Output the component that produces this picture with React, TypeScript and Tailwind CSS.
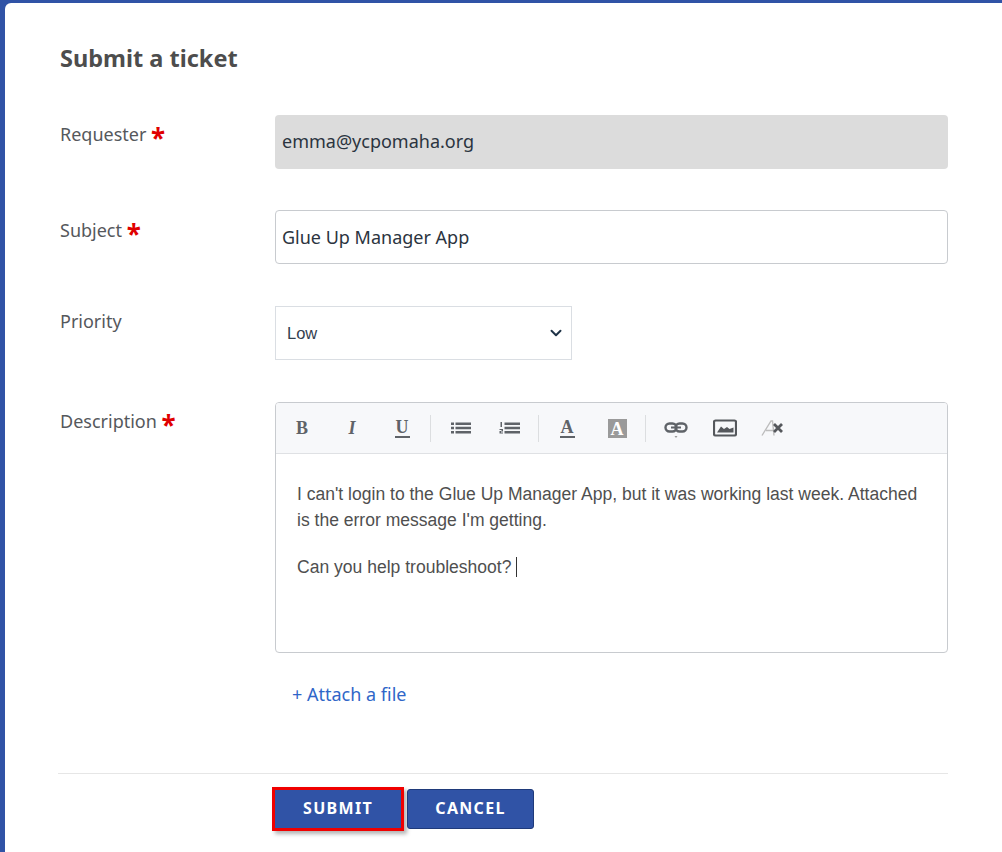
import { ChevronDown } from 'lucide-react'

const labelFont = 'font-["Noto_Sans","Open_Sans",sans-serif]'

function Star() {
  return <span className="text-[26px] leading-[18px] font-bold text-[#e00000] align-[-7px]">*</span>
}

function Label({ text, required }: { text: string; required?: boolean }) {
  return (
    <div className={`w-[215px] shrink-0 text-[18px] leading-[24px] text-[#55585c] ${labelFont}`}>
      {text}
      {required && <> <Star /></>}
    </div>
  )
}

function Sep({ className }: { className: string }) {
  return <div className={`h-[27px] w-px bg-[#dcdee0] ${className}`} />
}

function Tool({ children }: { children: React.ReactNode }) {
  return <div className="flex h-[28px] w-[40px] items-center justify-center text-[#5f6368]">{children}</div>
}

function Letter({ c, cls }: { c: string; cls: string }) {
  return <span className={`font-["Liberation_Serif",serif] text-[18px] leading-none ${cls}`}>{c}</span>
}

function ListIcon({ numbered }: { numbered?: boolean }) {
  return (
    <svg width="22" height="14" viewBox="0 0 22 14" fill="#5f6368">
      {numbered ? (
        <>
          <rect x="1.500" y="1" width="1.500" height="5" />
          <path d="M0.500 8h3.500v2.500h-2v1h2v1h-3.500v-2.500h2v-1h-2z" />
        </>
      ) : (
        <>
          <rect x="1" y="1.500" width="3" height="2.500" />
          <rect x="1" y="5.750" width="3" height="2.500" />
          <rect x="1" y="10" width="3" height="2.500" />
        </>
      )}
      <rect x="5.500" y="1.500" width="15.500" height="2.500" />
      <rect x="5.500" y="5.750" width="15.500" height="2.500" />
      <rect x="5.500" y="10" width="15.500" height="2.500" />
    </svg>
  )
}

function Toolbar() {
  return (
    <div className="flex h-[51px] items-center border-b border-[#dfe1e4] bg-[#f7f8fa] pl-[6px]">
      <Tool><Letter c="B" cls="font-bold" /></Tool>
      <div className="w-[10px]" />
      <Tool><Letter c="I" cls="font-bold italic" /></Tool>
      <div className="w-[10px]" />
      <Tool>
        <span className="border-b-2 border-[#5f6368] px-[1px]">
          <Letter c="U" cls="block font-bold text-[15px] leading-[15px]" />
        </span>
      </Tool>
      <Sep className="mr-[10px] ml-[8px]" />
      <Tool><ListIcon /></Tool>
      <div className="w-[9px]" />
      <Tool><ListIcon numbered /></Tool>
      <Sep className="mr-[8px] ml-[8px]" />
      <Tool>
        <span className="border-b-2 border-[#5f6368] px-[1px]">
          <Letter c="A" cls="block font-bold text-[16px] leading-[15px]" />
        </span>
      </Tool>
      <div className="w-[10px]" />
      <Tool>
        <span className="flex h-[19px] w-[19px] items-end justify-center bg-[#9a9a9a]">
          <Letter c="A" cls="font-bold text-white" />
        </span>
      </Tool>
      <Sep className="mr-[10px] ml-[8px]" />
      <Tool>
        <svg width="24" height="24" viewBox="0 0 24 24" fill="none">
          <rect x="1.500" y="7.500" width="11" height="8" rx="4" stroke="#5f6368" strokeWidth="2.400" />
          <rect x="11.500" y="7.500" width="11" height="8" rx="4" stroke="#5f6368" strokeWidth="2.400" />
          <rect x="7" y="10.500" width="10" height="2" fill="#5f6368" />
          <path d="M10.500 20h3l-1.500 2z" fill="#9a9a9a" />
        </svg>
      </Tool>
      <div className="w-[9px]" />
      <Tool>
        <svg width="24" height="18" viewBox="0 0 24 18" fill="none">
          <rect x="1" y="1.500" width="22" height="15" rx="1.500" stroke="#55585c" strokeWidth="2.200" />
          <path d="M4 13.500l4-6 3 2.500 3-2 2.500 2 4-1.500v5z" fill="#55585c" />
        </svg>
      </Tool>
      <div className="w-[8px]" />
      <Tool>
        <svg width="24" height="18" viewBox="0 0 24 18" fill="none">
          <path d="M1 16.500L10 2h1.500l1.500 14.500M5 11.500h7" stroke="#bdbdbd" strokeWidth="1.400" />
          <path d="M13 5l8 8M21 5l-8 8" stroke="#55585c" strokeWidth="2.800" />
        </svg>
      </Tool>
    </div>
  )
}

export default function App() {
  return (
    <div className="h-[852px] overflow-hidden bg-[#3053a6] pt-[3px] pl-[5px]">
      <div className={`h-[849px] rounded-tl-[6px] bg-white pr-[54px] pl-[55px] ${labelFont}`}>
        <h2 className="pt-[39px] text-[23.5px] leading-[32px] font-bold text-[#4d4d4d]">Submit a ticket</h2>

        <div className="mt-[41px] flex">
          <div className="pt-[7px]"><Label text="Requester" required /></div>
          <div className="flex h-[54px] w-[673px] items-center rounded-[4px] bg-[#dcdcdc] px-[7px] text-[18px] text-[#2b3440]">
            <span className="-mt-[1px]">emma@ycpomaha.org</span>
          </div>
        </div>

        <div className="mt-[41px] flex">
          <div className="pt-[8px]"><Label text="Subject" required /></div>
          <div className="flex h-[54px] w-[673px] items-center rounded-[4px] border border-[#c8cbcf] bg-white px-[6px] text-[18px] text-[#2b3440]">
            Glue Up Manager App
          </div>
        </div>

        <div className="mt-[42px] flex">
          <div className="pt-[3px]"><Label text="Priority" /></div>
          <div className='flex h-[54px] w-[297px] items-center justify-between border border-[#dadee3] bg-white pr-[6px] pl-[11px] font-["Liberation_Sans",sans-serif] text-[16.500px] text-[#33404f]'>
            <span className="mt-[1px]">Low</span>
            <ChevronDown size={18} strokeWidth={2.600} className="text-[#1f3347]" />
          </div>
        </div>

        <div className="mt-[42px] flex">
          <div className="pt-[7px]"><Label text="Description" required /></div>
          <div>
            <div className="h-[251px] w-[673px] overflow-hidden rounded-[4px] border border-[#c8cbcf] bg-white">
              <Toolbar />
              <div className='px-[21px] pt-[27px] font-["Liberation_Sans",sans-serif] text-[17.550px] leading-[26px] text-[#4f4f4f]'>
                <p>I can't login to the Glue Up Manager App, but it was working last week. Attached is the error message I'm getting.</p>
                <p className="mt-[21px]">
                  Can you help troubleshoot? <span className="inline-block h-[20px] w-px bg-[#333] align-[-4px]" />
                </p>
              </div>
            </div>
            <div className="mt-[28px] pl-[17px] text-[18px] leading-[26px] text-[#2f66c8]">+ Attach a file</div>
          </div>
        </div>

        <div className="mt-[66px] -ml-[2px] h-px w-[890px] bg-[#e6e6e6]" />

        <div className="mt-[13px] flex items-center pl-[212px]">
          <button
            type="button"
            className="h-[44px] w-[132px] border-[3px] border-[#f00000] bg-[#3053a6] pb-[2px] text-[16px] font-bold tracking-[1.300px] text-white shadow-[3px_3px_4px_rgba(0,0,0,0.3)]"
          >
            SUBMIT
          </button>
          <button
            type="button"
            className="ml-[3px] h-[40px] w-[127px] rounded-[3px] border border-[#1f3a7a] bg-[#3053a6] pb-[2px] text-[16px] font-bold tracking-[1.300px] text-white"
          >
            CANCEL
          </button>
        </div>
      </div>
    </div>
  )
}
